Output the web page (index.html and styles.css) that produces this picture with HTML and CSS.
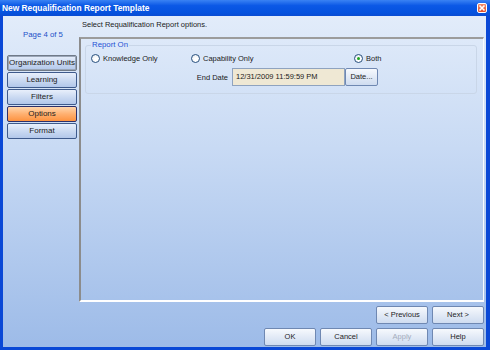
FILE: index.html
```html
<!DOCTYPE html>
<html lang="en">
<head>
  <meta charset="UTF-8" />
  <title>New Requalification Report Template</title>
  <link rel="stylesheet" href="styles.css">
</head>
<body>
  <div class="window">
    <div class="titlebar">
      <span class="title">New Requalification Report Template</span>
      <span class="close">
        <svg width="8" height="8" viewBox="0 0 8 8">
          <path d="M1.5 1.5 L6.5 6.5 M6.5 1.5 L1.5 6.5" stroke="#fff" stroke-width="1.6" />
        </svg>
      </span>
    </div>

    <div class="client">
      <div class="main">
        <div class="sidebar">
          <div class="page">Page 4 of 5</div>
          <div class="nav">
            <div class="nav-btn focused">Organization Units</div>
            <div class="nav-btn">Learning</div>
            <div class="nav-btn">Filters</div>
            <div class="nav-btn active">Options</div>
            <div class="nav-btn">Format</div>
          </div>
        </div>

        <div class="content">
          <div class="intro">Select Requalification Report options.</div>
          <div class="panel">
            <fieldset class="group">
              <legend>Report On</legend>
              <div class="radios">
                <label class="radio"><span class="dot"></span>Knowledge Only</label>
                <label class="radio"><span class="dot"></span>Capability Only</label>
                <label class="radio"><span class="dot checked"></span>Both</label>
              </div>
              <div class="date-row">
                <span class="date-label">End Date</span>
                <span class="date-input">12/31/2009 11:59:59 PM</span>
                <span class="btn date-btn">Date...</span>
              </div>
            </fieldset>
          </div>
        </div>
      </div>

      <div class="buttons">
        <span class="btn">&lt; Previous</span>
        <span class="btn">Next &gt;</span>
      </div>
      <div class="buttons">
        <span class="btn">OK</span>
        <span class="btn">Cancel</span>
        <span class="btn disabled">Apply</span>
        <span class="btn">Help</span>
      </div>
    </div>
  </div>
</body>
</html>
```

FILE: styles.css
```css
body {
  margin: 0;
  font-family: "Liberation Sans", Arial, sans-serif;
  font-size: 7.5px;
  color: #1b1b1b;
  background: #ffffff;
}

.window {
  width: 490px;
  height: 350px;
  box-sizing: border-box;
  border-style: solid;
  border-color: #0a48d6;
  border-width: 0 4px 3px 3px;
  display: flex;
  flex-direction: column;
}

.titlebar {
  height: 16px;
  margin: 0 -4px 0 -3px;
  padding: 0 3px 0 2px;
  background: linear-gradient(#3a82f4, #0b58e6 35%, #0552de 80%, #0a4cd2);
  display: flex;
  align-items: center;
  justify-content: space-between;
}

.title {
  color: #ffffff;
  font-weight: bold;
  font-size: 8.4px;
}

.close {
  width: 10px;
  height: 10px;
  box-sizing: border-box;
  border: 1px solid #ffffff;
  border-radius: 2px;
  background: linear-gradient(#f08a6a, #e0502a);
  display: flex;
  align-items: center;
  justify-content: center;
}

.close svg {
  display: block;
}

.client {
  flex: 1;
  display: flex;
  flex-direction: column;
  padding: 0 2px 1px 0;
  background: linear-gradient(#e2ecfa, #c8daf4 40%, #9dbbe8);
}

.main {
  flex: 1;
  display: flex;
}

.sidebar {
  width: 76px;
  padding-left: 4px;
  box-sizing: border-box;
}

.page {
  margin: 13px 0 15px;
  height: 11px;
  line-height: 11px;
  text-align: center;
  color: #2350c8;
  font-size: 7.8px;
}

.nav-btn {
  width: 70px;
  height: 16px;
  margin-bottom: 1px;
  box-sizing: border-box;
  border: 1px solid #3e5a8c;
  border-radius: 2px;
  background: linear-gradient(#e8effb, #cbdaf2 50%, #b2c7ea);
  text-align: center;
  line-height: 14px;
  font-size: 8px;
  color: #1d1d1d;
}

.nav-btn.focused {
  border-color: #707a88;
  box-shadow: inset 0 0 0 1px #9aa6b8;
}

.nav-btn.active {
  border-color: #2c2f6a;
  background: linear-gradient(#ffd6ac, #ffb070 50%, #fd9340);
}

.content {
  flex: 1;
  display: flex;
  flex-direction: column;
}

.intro {
  height: 21px;
  padding: 4px 0 0 3px;
  box-sizing: border-box;
  line-height: 10px;
}

.panel {
  flex: 1;
  border-style: solid;
  border-width: 2px 1px 2px 2px;
  border-color: #9c9c9c #fafcff #ffffff #8c8c8c;
  padding: 0 6px 0 4px;
}

.group {
  margin: 1px 0 0;
  padding: 0 5px 7px;
  border: 1px solid #c9d6e8;
  border-radius: 3px;
}

.group legend {
  padding: 0 1px;
  color: #2452d4;
  font-size: 7.8px;
  line-height: 10px;
}

.radios {
  display: grid;
  grid-template-columns: 100px 163px auto;
  margin-top: 3px;
  height: 10px;
}

.radio {
  display: flex;
  align-items: center;
  gap: 3px;
}

.dot {
  width: 9px;
  height: 9px;
  box-sizing: border-box;
  border: 1px solid #28507e;
  border-radius: 50%;
  background: radial-gradient(circle at 60% 65%, #ffffff 30%, #dfe4ea);
  display: flex;
  align-items: center;
  justify-content: center;
}

.dot.checked::after {
  content: "";
  width: 3px;
  height: 3px;
  border-radius: 50%;
  background: #1fa51f;
}

.date-row {
  display: flex;
  align-items: center;
  margin-top: 5px;
  height: 18px;
}

.date-label {
  margin-left: 99px;
  width: 42px;
  padding-right: 4px;
  box-sizing: border-box;
  text-align: right;
  white-space: nowrap;
}

.date-input {
  width: 113px;
  height: 18px;
  box-sizing: border-box;
  border: 1px solid #8fa3bf;
  background: #efe8d4;
  padding-left: 3px;
  line-height: 16px;
}

.btn {
  width: 52px;
  height: 18px;
  box-sizing: border-box;
  border: 1px solid #6f88b2;
  border-radius: 2px;
  background: linear-gradient(#f6f9fd, #e2eaf6 50%, #cfdcf0);
  text-align: center;
  line-height: 16px;
  color: #1d1d1d;
}

.date-btn {
  width: 33px;
}

.btn.disabled {
  color: #a4acbc;
}

.buttons {
  display: flex;
  justify-content: flex-end;
  gap: 4px;
  margin-top: 4px;
}
```
